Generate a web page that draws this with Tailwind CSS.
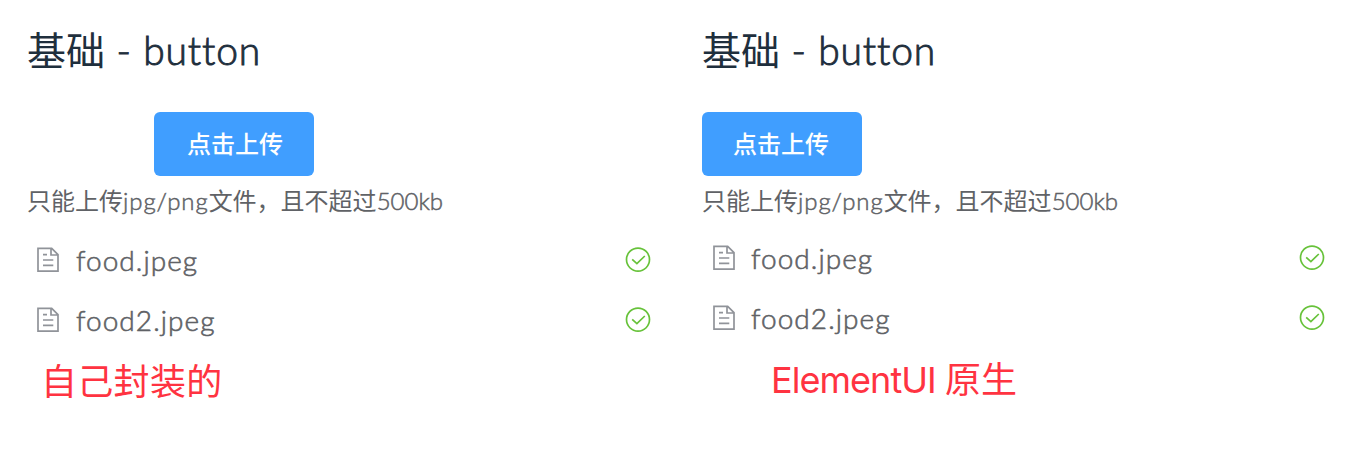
<!DOCTYPE html>
<html lang="zh">
<head>
<meta charset="utf-8">
<script src="https://cdn.jsdelivr.net/npm/@tailwindcss/browser@4"></script>
</head>
<body class="bg-white w-[1356px] h-[458px] overflow-hidden font-['Lato','Noto_Sans_CJK_SC',sans-serif] [font-variant-ligatures:none]">
<svg class="hidden">
<symbol id="doc" viewBox="0 0 24 26"><path d="M2 1.3H15.7L22 7.6V24.2H2Z M15 1.3V8H22 M7 7.7H11 M7 13H17.3 M7 18.4H17.3" fill="none" stroke="#909399" stroke-width="1.7"/></symbol>
<symbol id="ok" viewBox="0 0 26 26"><circle cx="13" cy="12.6" r="11.5" fill="none" stroke="#67c23a" stroke-width="1.7"/><path d="M7.2 12.3L11.9 16.6L19.8 9" fill="none" stroke="#67c23a" stroke-width="1.7"/></symbol>
</svg>
<main class="flex">
<section class="w-[675px] pl-[27px] pt-[22px]">
<h1 class="h-[56px] leading-[56px] text-[39px] text-[#1f2f3d] whitespace-nowrap">基础<span class="font-light tracking-[0.85px] [-webkit-text-stroke:0.9px_#1f2f3d]"> - button</span></h1>
<button class="block mt-[34px] ml-[127px] w-[160px] h-[64px] pl-[2px] rounded-[6px] bg-[#409eff] text-white text-[24px] font-medium">点击上传</button>
<p class="mt-[7px] h-[36px] leading-[36px] text-[24px] text-[#606266] whitespace-nowrap">只能上传<span class="font-light tracking-[0.9px] [-webkit-text-stroke:0.5px_#606266]">jpg/png</span>文件，且不超过<span class="font-light [-webkit-text-stroke:0.5px_#606266]">500kb</span></p>
<ul class="mt-[11px] w-[624px] text-[28px] font-light tracking-[1.05px] [-webkit-text-stroke:0.6px_#606266] text-[#606266]">
<li class="flex items-center h-[60px] pl-[9px]"><svg class="w-6 h-[26px]"><use href="#doc"/></svg><span class="ml-4">food.jpeg</span><svg class="ml-auto w-[26px] h-[26px]"><use href="#ok"/></svg></li>
<li class="flex items-center h-[60px] pl-[9px]"><svg class="w-6 h-[26px]"><use href="#doc"/></svg><span class="ml-4">food2.jpeg</span><svg class="ml-auto w-[26px] h-[26px]"><use href="#ok"/></svg></li>
</ul>
<p class="mt-[3px] ml-[14px] h-[56px] leading-[56px] text-[36px] tracking-[0.3px] text-[#ff3341] whitespace-nowrap">自己封装的</p>
</section>
<section class="w-[675px] pl-[27px] pt-[22px]">
<h1 class="h-[56px] leading-[56px] text-[39px] text-[#1f2f3d] whitespace-nowrap">基础<span class="font-light tracking-[0.85px] [-webkit-text-stroke:0.9px_#1f2f3d]"> - button</span></h1>
<button class="block mt-[34px] w-[160px] h-[64px] pr-[2px] rounded-[6px] bg-[#409eff] text-white text-[24px] font-medium">点击上传</button>
<p class="mt-[7px] h-[36px] leading-[36px] text-[24px] text-[#606266] whitespace-nowrap">只能上传<span class="font-light tracking-[0.9px] [-webkit-text-stroke:0.5px_#606266]">jpg/png</span>文件，且不超过<span class="font-light [-webkit-text-stroke:0.5px_#606266]">500kb</span></p>
<ul class="mt-[9px] w-[623px] text-[28px] font-light tracking-[1.05px] [-webkit-text-stroke:0.6px_#606266] text-[#606266]">
<li class="flex items-center h-[60px] pl-[10px]"><svg class="w-6 h-[26px]"><use href="#doc"/></svg><span class="ml-[15px]">food.jpeg</span><svg class="ml-auto w-[26px] h-[26px]"><use href="#ok"/></svg></li>
<li class="flex items-center h-[60px] pl-[10px]"><svg class="w-6 h-[26px]"><use href="#doc"/></svg><span class="ml-[15px]">food2.jpeg</span><svg class="ml-auto w-[26px] h-[26px]"><use href="#ok"/></svg></li>
</ul>
<p class="mt-[4px] ml-[69px] h-[56px] leading-[56px] text-[36px] text-[#ff3341] whitespace-nowrap font-['Inter','Noto_Sans_CJK_SC',sans-serif]"><span class="tracking-[-0.95px]">ElementUI </span>原生</p>
</section>
</main>
</body>
</html>
